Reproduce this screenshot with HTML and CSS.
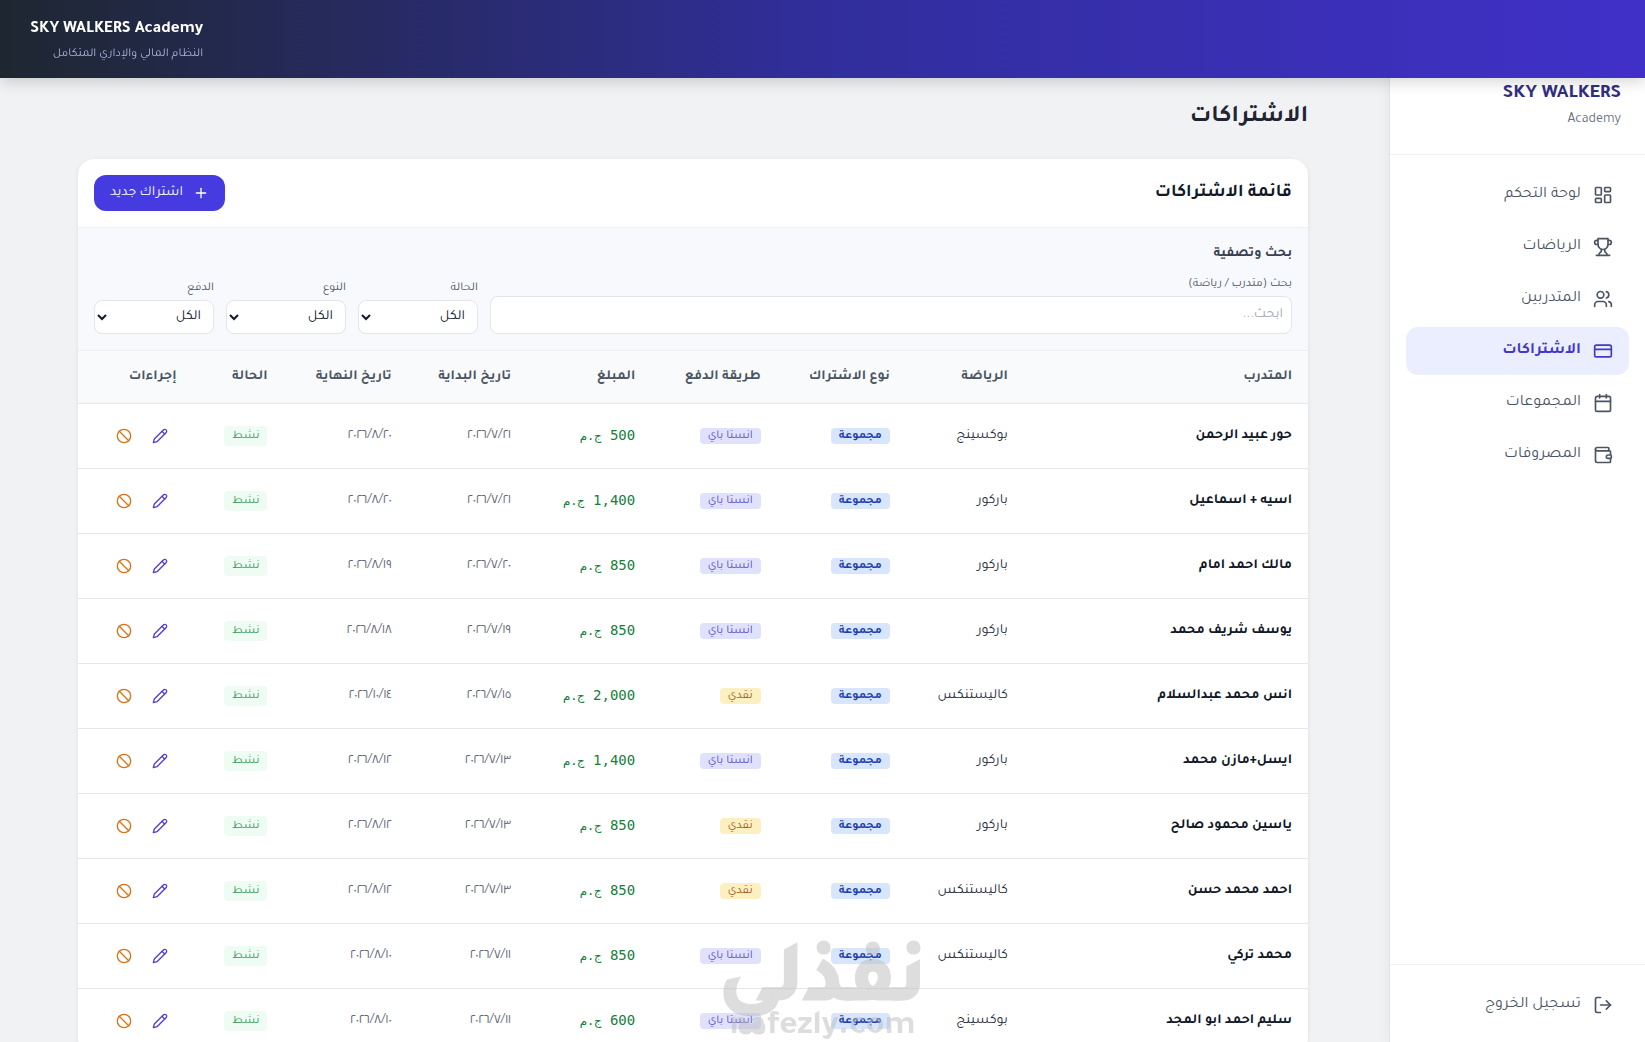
FILE: index.html
```html
<!DOCTYPE html>
<html lang="ar" dir="rtl">
<head>
  <meta charset="UTF-8">
  <meta name="viewport" content="width=device-width, initial-scale=1.0">
  <title>الاشتراكات - SKY WALKERS Academy</title>
  <link rel="stylesheet" href="styles.css">
</head>
<body>
  <svg class="sprite" aria-hidden="true">
    <symbol id="i-dashboard" viewBox="0 0 24 24"><rect x="3" y="3" width="7" height="9" rx="1"/><rect x="14" y="3" width="7" height="5" rx="1"/><rect x="14" y="12" width="7" height="9" rx="1"/><rect x="3" y="16" width="7" height="5" rx="1"/></symbol>
    <symbol id="i-trophy" viewBox="0 0 24 24"><path d="M6 9H4.5a2.5 2.5 0 0 1 0-5H6"/><path d="M18 9h1.5a2.5 2.5 0 0 0 0-5H18"/><path d="M4 22h16"/><path d="M10 14.66V17c0 .55-.47.98-.97 1.21C7.85 18.75 7 20.24 7 22"/><path d="M14 14.66V17c0 .55.47.98.97 1.21C16.15 18.75 17 20.24 17 22"/><path d="M18 2H6v7a6 6 0 0 0 12 0V2Z"/></symbol>
    <symbol id="i-users" viewBox="0 0 24 24"><path d="M16 21v-2a4 4 0 0 0-4-4H6a4 4 0 0 0-4 4v2"/><circle cx="9" cy="7" r="4"/><path d="M22 21v-2a4 4 0 0 0-3-3.87"/><path d="M16 3.13a4 4 0 0 1 0 7.75"/></symbol>
    <symbol id="i-card" viewBox="0 0 24 24"><rect x="2" y="5" width="20" height="14" rx="2"/><path d="M2 10h20"/></symbol>
    <symbol id="i-calendar" viewBox="0 0 24 24"><path d="M8 2v4"/><path d="M16 2v4"/><rect x="3" y="4" width="18" height="18" rx="2"/><path d="M3 10h18"/></symbol>
    <symbol id="i-wallet" viewBox="0 0 24 24"><path d="M19 7V4a1 1 0 0 0-1-1H5a2 2 0 0 0 0 4h15a1 1 0 0 1 1 1v4h-3a2 2 0 0 0 0 4h3a1 1 0 0 0 1-1v-2a1 1 0 0 0-1-1"/><path d="M3 5v14a2 2 0 0 0 2 2h15a1 1 0 0 0 1-1v-4"/></symbol>
    <symbol id="i-logout" viewBox="0 0 24 24"><path d="M9 21H5a2 2 0 0 1-2-2V5a2 2 0 0 1 2-2h4"/><path d="m16 17 5-5-5-5"/><path d="M21 12H9"/></symbol>
    <symbol id="i-plus" viewBox="0 0 24 24"><path d="M5 12h14"/><path d="M12 5v14"/></symbol>
    <symbol id="i-edit" viewBox="0 0 24 24"><path d="M17 3a2.85 2.83 0 1 1 4 4L7.5 20.5 2 22l1.5-5.5Z"/><path d="m15 5 4 4"/></symbol>
    <symbol id="i-ban" viewBox="0 0 24 24"><circle cx="12" cy="12" r="10"/><path d="m4.9 4.9 14.2 14.2"/></symbol>
  </svg>

  <header class="topbar">
    <div class="topbar-brand">
      <strong>SKY WALKERS Academy</strong>
      <span>النظام المالي والإداري المتكامل</span>
    </div>
  </header>

  <div class="layout">
    <aside class="sidebar">
      <div class="sidebar-brand">
        <h2>SKY WALKERS</h2>
        <p>Academy</p>
      </div>
      <nav class="nav">
        <a href="#" class="nav-link"><svg class="icon"><use href="#i-dashboard"/></svg><span>لوحة التحكم</span></a>
        <a href="#" class="nav-link"><svg class="icon"><use href="#i-trophy"/></svg><span>الرياضات</span></a>
        <a href="#" class="nav-link"><svg class="icon"><use href="#i-users"/></svg><span>المتدربين</span></a>
        <a href="#" class="nav-link active"><svg class="icon"><use href="#i-card"/></svg><span>الاشتراكات</span></a>
        <a href="#" class="nav-link"><svg class="icon"><use href="#i-calendar"/></svg><span>المجموعات</span></a>
        <a href="#" class="nav-link"><svg class="icon"><use href="#i-wallet"/></svg><span>المصروفات</span></a>
      </nav>
      <div class="sidebar-footer">
        <button type="button" class="nav-link"><svg class="icon"><use href="#i-logout"/></svg><span>تسجيل الخروج</span></button>
      </div>
    </aside>

    <main class="main">
      <h1 class="page-title">الاشتراكات</h1>
      <section class="card">
        <div class="card-header">
          <h2>قائمة الاشتراكات</h2>
          <button type="button" class="btn-primary"><svg class="icon"><use href="#i-plus"/></svg><span>اشتراك جديد</span></button>
        </div>

        <div class="filters">
          <h3>بحث وتصفية</h3>
          <div class="filter-row">
            <div class="field field-search">
              <label for="search">بحث (متدرب / رياضة)</label>
              <input type="text" id="search" placeholder="ابحث...">
            </div>
            <div class="field">
              <label for="status">الحالة</label>
              <select id="status"><option>الكل</option></select>
            </div>
            <div class="field">
              <label for="type">النوع</label>
              <select id="type"><option>الكل</option></select>
            </div>
            <div class="field">
              <label for="payment">الدفع</label>
              <select id="payment"><option>الكل</option></select>
            </div>
          </div>
        </div>

        <table class="table">
          <thead>
            <tr>
              <th class="col-name">المتدرب</th>
              <th class="col-sport">الرياضة</th>
              <th class="col-type">نوع الاشتراك</th>
              <th class="col-pay">طريقة الدفع</th>
              <th class="col-amount">المبلغ</th>
              <th class="col-start">تاريخ البداية</th>
              <th class="col-end">تاريخ النهاية</th>
              <th class="col-status">الحالة</th>
              <th class="col-actions">إجراءات</th>
            </tr>
          </thead>
          <tbody id="rows"></tbody>
        </table>
      </section>
    </main>
  </div>

  <div class="watermark" aria-hidden="true">
    <span class="watermark-ar">نفذلي</span>
    <span class="watermark-en">nafezly.com</span>
  </div>

  <script src="script.js"></script>
</body>
</html>
```
FILE: styles.css
```css
* { box-sizing: border-box; }
body { margin: 0; font-family: Tajawal, "Noto Sans Arabic", "Noto Sans", "DejaVu Sans", sans-serif; font-size: 16px; line-height: 24px; color: #111827; background: #f0f2f4; height: 100vh; overflow: hidden; }
h1, h2, h3, p { margin: 0; }
button, input, select { font-family: inherit; }
.sprite { display: none; }
.icon { width: 20px; height: 20px; flex-shrink: 0; fill: none; stroke: currentColor; stroke-width: 2; stroke-linecap: round; stroke-linejoin: round; }

/* header */
.topbar { position: fixed; top: 0; left: 0; right: 0; z-index: 10; height: 78px; padding: 2px 30px 0; display: flex; align-items: center; justify-content: flex-end; background: linear-gradient(to left, #4030c8, #312e9c 50%, #1e2730); box-shadow: 0 4px 14px rgba(0,0,0,0.16); }
.topbar-brand { display: flex; flex-direction: column; color: #fff; }
.topbar-brand strong { font-size: 17px; line-height: 28px; }
.topbar-brand span { font-size: 12px; line-height: 20px; color: #a9b3d8; }

.layout { display: flex; height: 100vh; }

/* sidebar */
.sidebar { width: 256px; flex-shrink: 0; padding-top: 56px; display: flex; flex-direction: column; background: #fff; border-left: 1px solid #e2e4e8; box-shadow: 0 0 14px rgba(0,0,0,0.06); }
.sidebar-brand { padding: 24px 24px 22px; border-bottom: 1px solid #f0f1f3; }
.sidebar-brand h2 { font-size: 20px; line-height: 28px; color: #312e81; }
.sidebar-brand p { font-size: 14px; line-height: 24px; color: #6b7280; }
.nav { flex: 1; padding: 16px; display: flex; flex-direction: column; gap: 4px; }
.nav-link { display: flex; align-items: center; gap: 12px; width: 100%; height: 48px; padding: 0 16px; border: 0; border-radius: 12px; background: none; color: #4b5563; font-size: 16px; text-decoration: none; text-align: right; }
.nav-link.active { background: #eaeefe; color: #4338ca; font-weight: 700; }
.sidebar-footer { padding: 16px 16px 13px; border-top: 1px solid #f0f1f3; }

/* content */
.main { flex: 1; padding: 102px 81px 0 78px; }
.page-title { font-size: 24px; line-height: 32px; margin-bottom: 25px; color: #1f2430; }
.card { background: #fff; border-radius: 16px; overflow: hidden; box-shadow: 0 1px 4px rgba(0,0,0,0.08); }
.card-header { display: flex; align-items: center; justify-content: space-between; padding: 16px; border-bottom: 1px solid #eef0f3; }
.card-header h2 { font-size: 18px; line-height: 28px; }
.btn-primary { display: flex; align-items: center; gap: 10px; height: 36px; padding: 0 16px; border: 0; border-radius: 12px; background: #463be0; color: #fff; font-size: 14px; }
.btn-primary .icon { width: 16px; height: 16px; }

.filters { padding: 14px 16px 16px; background: #f7f9fd; border-bottom: 1px solid #eceff3; }
.filters h3 { font-size: 14px; line-height: 24px; margin-bottom: 10px; color: #374151; }
.filter-row { display: flex; align-items: flex-end; gap: 12px; }
.field { display: flex; flex-direction: column; width: 120px; }
.field-search { flex: 1; width: auto; }
.field label { font-size: 12px; line-height: 16px; margin-bottom: 4px; color: #4b5563; }
.field input, .field select { height: 34px; width: 100%; padding: 0 8px; border: 1px solid #e2e5ea; border-radius: 8px; background: #fff; color: #111827; font-size: 14px; }
.field input { height: 38px; }
.field input::placeholder { color: #a3a8b0; }

.table { width: 100%; table-layout: fixed; border-collapse: collapse; font-size: 14px; line-height: 20px; }
.table th { height: 52px; padding: 0 16px; text-align: right; background: #f8fafc; color: #4b5563; font-weight: 700; border-bottom: 1px solid #e3e6ea; }
.table td { height: 65px; padding: 0 16px; border-bottom: 1px solid #e3e6ea; white-space: nowrap; }
.col-name { width: 23.1%; }
.col-sport { width: 9.6%; }
.col-type { width: 10.5%; }
.col-pay { width: 10.2%; }
.col-amount { width: 10.1%; }
.col-start { width: 9.7%; }
.col-end { width: 10.1%; }
.col-status { width: 7.4%; }
.table .name { font-weight: 700; }
.table .sport { color: #1f2937; }
.table .amount { font-family: "DejaVu Sans Mono", monospace; color: #15803d; }
.table .currency { font-size: 12px; }
.table .date { color: #5f6672; }

.badge { display: inline-block; padding: 0 8px; border-radius: 4px; font-size: 12px; line-height: 16px; }
.badge-group { background: #d7e6fd; color: #1e40af; font-weight: 700; }
.badge-insta { background: #e0e2fd; color: #5b4fc0; }
.badge-cash { background: #fdf0c0; color: #a35a1c; }
.badge-active { background: #effcf3; color: #2f9a58; line-height: 20px; }

.actions { display: flex; gap: 4px; }
.actions button { display: flex; align-items: center; justify-content: center; width: 32px; height: 32px; padding: 0; border: 0; border-radius: 8px; background: none; }
.actions .icon { width: 16px; height: 16px; }
.actions .edit { color: #4f3fd8; }
.actions .ban { color: #d97316; }

.watermark { position: fixed; left: 50%; bottom: -2px; z-index: 5; transform: translateX(-50%); display: flex; flex-direction: column; align-items: center; color: #bbb; opacity: 0.5; font-weight: 700; pointer-events: none; }
.watermark-ar { font-size: 84px; line-height: 50px; -webkit-text-stroke: 3px #bbb; }
.watermark-en { font-size: 35px; line-height: 32px; }
```
FILE: script.js
```javascript
// name, sport, payment, amount, start date, end date
const subscriptions = [
  ['حور عبيد الرحمن', 'بوكسينج', 'insta', '500', '٢٠٢٦/٧/٢١', '٢٠٢٦/٨/٢٠'],
  ['اسيه + اسماعيل', 'باركور', 'insta', '1,400', '٢٠٢٦/٧/٢١', '٢٠٢٦/٨/٢٠'],
  ['مالك احمد امام', 'باركور', 'insta', '850', '٢٠٢٦/٧/٢٠', '٢٠٢٦/٨/١٩'],
  ['يوسف شريف محمد', 'باركور', 'insta', '850', '٢٠٢٦/٧/١٩', '٢٠٢٦/٨/١٨'],
  ['انس محمد عبدالسلام', 'كاليستنكس', 'cash', '2,000', '٢٠٢٦/٧/١٥', '٢٠٢٦/١٠/١٤'],
  ['ايسل+مازن محمد', 'باركور', 'insta', '1,400', '٢٠٢٦/٧/١٣', '٢٠٢٦/٨/١٢'],
  ['ياسين محمود صالح', 'باركور', 'cash', '850', '٢٠٢٦/٧/١٣', '٢٠٢٦/٨/١٢'],
  ['احمد محمد حسن', 'كاليستنكس', 'cash', '850', '٢٠٢٦/٧/١٣', '٢٠٢٦/٨/١٢'],
  ['محمد تركي', 'كاليستنكس', 'insta', '850', '٢٠٢٦/٧/١١', '٢٠٢٦/٨/١٠'],
  ['سليم احمد ابو المجد', 'بوكسينج', 'insta', '600', '٢٠٢٦/٧/١١', '٢٠٢٦/٨/١٠'],
];
const payments = { insta: 'انستا باي', cash: 'نقدي' };

document.getElementById('rows').innerHTML = subscriptions.map(([name, sport, pay, amount, start, end]) => `
  <tr>
    <td class="name">${name}</td>
    <td class="sport">${sport}</td>
    <td><span class="badge badge-group">مجموعة</span></td>
    <td><span class="badge badge-${pay}">${payments[pay]}</span></td>
    <td class="amount">${amount} <span class="currency">ج.م</span></td>
    <td class="date">${start}</td>
    <td class="date">${end}</td>
    <td><span class="badge badge-active">نشط</span></td>
    <td>
      <div class="actions">
        <button type="button" class="edit" aria-label="تعديل"><svg class="icon"><use href="#i-edit"/></svg></button>
        <button type="button" class="ban" aria-label="إيقاف"><svg class="icon"><use href="#i-ban"/></svg></button>
      </div>
    </td>
  </tr>`).join('');
```
